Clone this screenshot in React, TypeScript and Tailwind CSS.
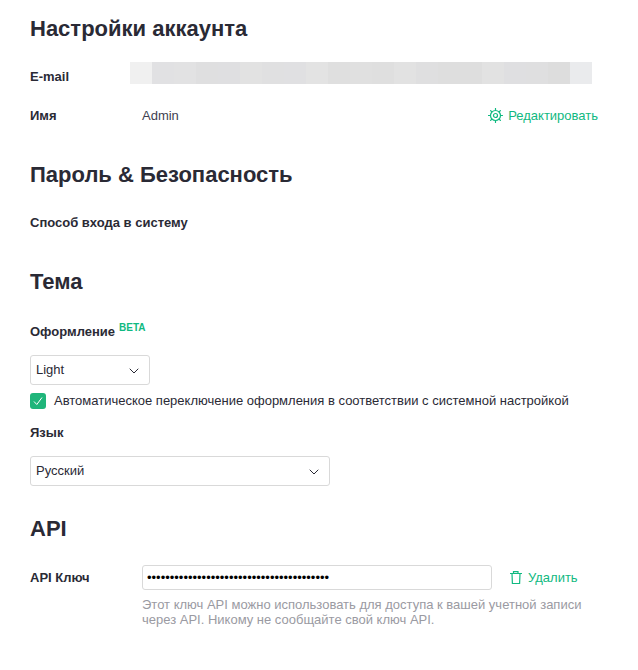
import React from 'react';
import { ChevronDown } from 'lucide-react';

const blurCells = [
  'bg-[#f0f0f0]', 'bg-[#e1e1e3]', 'bg-[#e2e2e3]', 'bg-[#dfdfe0]', 'bg-[#dfdfe1]', 'bg-[#e2e2e2]', 'bg-[#e0e0e1]',
  'bg-[#e0e0e2]', 'bg-[#e3e3e3]', 'bg-[#dfdfdf]', 'bg-[#e0e0e0]', 'bg-[#dfdfdf]', 'bg-[#e2e2e2]', 'bg-[#dfdfe0]',
  'bg-[#dedede]', 'bg-[#dedede]', 'bg-[#e2e2e2]', 'bg-[#dfdfe1]', 'bg-[#dfdfe0]', 'bg-[#dddddd]', 'bg-[#eaebed]',
];

const GearIcon = () => (
  <svg width="16" height="16" viewBox="0 0 16 16" fill="none" stroke="#10b981" strokeWidth="1.2" strokeLinecap="round">
    <circle cx="7.5" cy="7.5" r="5" />
    <circle cx="7.5" cy="7.5" r="2" />
    <path d="M7.5.5v1.5M7.5 13v1.5M.5 7.5H2M13 7.5h1.5M2.6 2.6l.9.9M11.5 11.5l.9.9M2.6 12.4l.9-.9M11.5 3.5l.9-.9" />
  </svg>
);

const TrashIcon = () => (
  <svg width="12" height="13" viewBox="0 0 12 13" fill="none" stroke="#10b981" strokeWidth="1.2">
    <path d="M0 2.5h12M3.5 2.5V.6h4.5v1.9M2 2.5l.4 10h7.2l.4-10" />
  </svg>
);

export default function App() {
  return (
    <div className="min-h-[670px] bg-white pl-[30px] pr-10 pt-4 font-['Liberation_Sans',Arial,sans-serif] text-[13px] text-[#2a2a35]">
      <h2 className="text-[22px] leading-[26px] font-bold">Настройки аккаунта</h2>

      <div className="mt-[20px] flex h-[22px] items-start">
        <span className="mt-[6px] w-[100px] leading-[18px] font-bold">E-mail</span>
        <div className="flex h-[22px]">
          {blurCells.map((c, i) => (
            <div key={i} className={`w-[22px] ${c}`} />
          ))}
        </div>
      </div>

      <div className="mt-[23px] flex h-[18px] items-center">
        <span className="w-[112px] font-bold">Имя</span>
        <span className="text-[#3f3f50]">Admin</span>
        <a className="ml-auto flex items-center gap-[4px] text-[#10b981]">
          <GearIcon />
          Редактировать
        </a>
      </div>

      <h2 className="mt-[37px] text-[22px] leading-[26px] font-bold">Пароль &amp; Безопасность</h2>
      <div className="mt-[26px] leading-[18px] font-bold">Способ входа в систему</div>

      <h2 className="mt-[37px] text-[22px] leading-[26px] font-bold">Тема</h2>
      <div className="mt-[28px] flex leading-[18px] font-bold">
        Оформление
        <span className="-mt-[2px] ml-1 text-[10px] leading-[14px] text-[#10b981]">BETA</span>
      </div>

      <div className="mt-[14px] flex h-[30px] w-[120px] items-center justify-between rounded-[3px] border border-[#d9d9d9] pr-[7px] pl-[5px]">
        <span>Light</span>
        <ChevronDown size={16} strokeWidth={1.5} className="mt-[1px]" />
      </div>

      <label className="mt-[8px] flex h-4 items-center gap-[8px]">
        <span className="flex h-4 w-4 items-center justify-center rounded-[3px] bg-[#1fb57a]">
          <svg width="10" height="10" viewBox="0 0 10 10" fill="none" stroke="#fff" strokeWidth="1">
            <path d="M1 5.5 3.8 8.5 9 1.5" />
          </svg>
        </span>
        Автоматическое переключение оформления в соответствии с системной настройкой
      </label>

      <div className="mt-[15px] leading-[18px] font-bold">Язык</div>

      <div className="mt-[14px] flex h-[30px] w-[300px] items-center justify-between rounded-[3px] border border-[#d9d9d9] pr-[7px] pl-[5px]">
        <span>Русский</span>
        <ChevronDown size={16} strokeWidth={1.5} className="mt-[1px]" />
      </div>

      <h2 className="mt-[30px] text-[22px] leading-[26px] font-bold">API</h2>

      <div className="mt-[23px] flex items-center">
        <span className="w-[112px] font-bold">API Ключ</span>
        <div className="flex h-[25px] w-[350px] items-center rounded-[3px] border border-[#d9d9d9] pl-[4px] text-black">
          ••••••••••••••••••••••••••••••••••••••••
        </div>
        <a className="ml-[18px] flex items-center gap-[6px] text-[#10b981]">
          <TrashIcon />
          Удалить
        </a>
      </div>

      <p className="mt-[7px] ml-[112px] w-[450px] leading-[15px] text-[#9a9aa2]">
        Этот ключ API можно использовать для доступа к вашей учетной записи через API. Никому не сообщайте свой ключ API.
      </p>
    </div>
  );
}
